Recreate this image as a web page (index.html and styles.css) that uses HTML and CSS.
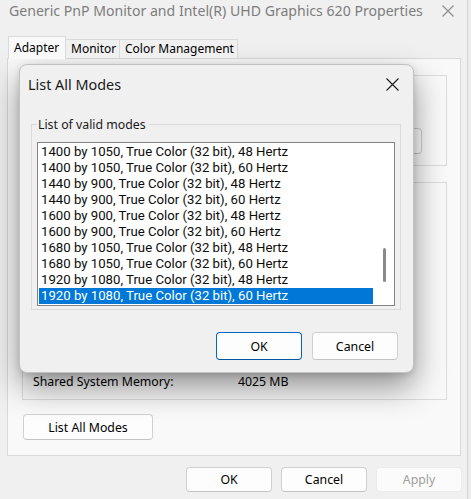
FILE: index.html
```html
<!DOCTYPE html>
<html>
<head>
<meta charset="utf-8">
<link rel="stylesheet" href="styles.css">
</head>
<body>
<div class="window">
  <div class="titlebar">
    <span class="title">Generic PnP Monitor and Intel(R) UHD Graphics 620 Properties</span>
    <svg class="xicon" width="12" height="12" viewBox="0 0 12 12"><path d="M0.5 0.5L11.5 11.5M11.5 0.5L0.5 11.5" stroke="#8a8a8a" stroke-width="1.1" fill="none"/></svg>
  </div>
  <div class="tabs">
    <div class="tab active">Adapter</div>
    <div class="tab">Monitor</div>
    <div class="tab">Color Management</div>
  </div>
  <div class="panel">
    <div class="group g1"><div class="btn gbtn">Properties</div></div>
    <div class="group g2">
      <div class="memrow"><span class="memlabel">Shared System Memory:</span><span>4025 MB</span></div>
    </div>
    <div class="btn listbtn">List All Modes</div>
  </div>
  <div class="footer">
    <div class="btn fbtn">OK</div>
    <div class="btn fbtn">Cancel</div>
    <div class="btn fbtn disabled">Apply</div>
  </div>

  <div class="dialog">
    <div class="dtitlebar">
      <span class="dtitle">List All Modes</span>
      <svg class="dx" width="13" height="13" viewBox="0 0 13 13"><path d="M0.5 0.5L12.5 12.5M12.5 0.5L0.5 12.5" stroke="#1a1a1a" stroke-width="1.1" fill="none"/></svg>
    </div>
    <fieldset class="modes">
      <legend>List of valid modes</legend>
      <div class="listbox">
        <div class="rows">
          <div class="row">1400 by 1050, True Color (32 bit), 48 Hertz</div>
          <div class="row">1400 by 1050, True Color (32 bit), 60 Hertz</div>
          <div class="row">1440 by 900, True Color (32 bit), 48 Hertz</div>
          <div class="row">1440 by 900, True Color (32 bit), 60 Hertz</div>
          <div class="row">1600 by 900, True Color (32 bit), 48 Hertz</div>
          <div class="row">1600 by 900, True Color (32 bit), 60 Hertz</div>
          <div class="row">1680 by 1050, True Color (32 bit), 48 Hertz</div>
          <div class="row">1680 by 1050, True Color (32 bit), 60 Hertz</div>
          <div class="row">1920 by 1080, True Color (32 bit), 48 Hertz</div>
          <div class="row sel">1920 by 1080, True Color (32 bit), 60 Hertz</div>
        </div>
        <div class="scroll"><div class="thumb"></div></div>
      </div>
    </fieldset>
    <div class="dbuttons">
      <div class="btn dbtn default">OK</div>
      <div class="btn dbtn">Cancel</div>
    </div>
  </div>
</div>
</body>
</html>
```

FILE: styles.css
```css
html, body {
  margin: 0;
  padding: 0;
}
body {
  width: 471px;
  height: 499px;
  overflow: hidden;
  background: #ececec;
  font-family: "Noto Sans", "Open Sans", sans-serif;
  font-size: 12.3px;
  color: #000;
}
.window {
  position: relative;
  width: 468px;
  height: 499px;
  background: #f0f0f0;
  border-right: 1px solid #d4d4d4;
  box-sizing: border-box;
}
.titlebar {
  height: 21px;
  display: flex;
  align-items: center;
  justify-content: space-between;
  padding: 0 13px 0 9px;
}
.title {
  font-size: 14.1px;
  color: #7d7d7d;
  white-space: nowrap;
}
.tabs {
  display: flex;
  align-items: flex-end;
  height: 22px;
  margin: 15px 0 0 8px;
  position: relative;
  z-index: 1;
}
.tab {
  height: 19px;
  line-height: 18px;
  padding: 0 5px;
  border: 1px solid #d9d9d9;
  border-bottom: none;
  background: #f0f0f0;
  box-sizing: border-box;
  white-space: nowrap;
  font-size: 12px;
}
.tab + .tab {
  border-left: none;
}
.tab.active {
  height: 23px;
  line-height: 22px;
  background: #f9f9f9;
  width: 58px;
  margin-bottom: -1px;
  padding: 0 5px;
}
.tab:nth-child(2) { width: 54px; }
.tab:nth-child(3) { width: 118px; }
.panel {
  margin-left: 7px;
  width: 454px;
  height: 398px;
  border: 1px solid #d9d9d9;
  background: #f9f9f9;
  box-sizing: border-box;
  padding: 16px 0 0 14px;
  display: flex;
  flex-direction: column;
}
.group {
  width: 425px;
  border: 1px solid #dcdcdc;
  box-sizing: border-box;
}
.g1 {
  height: 91px;
  display: flex;
  justify-content: flex-end;
  padding: 52px 24px 0 0;
}
.gbtn {
  width: 90px;
  height: 26px;
}
.g2 {
  height: 218px;
  margin-top: 16px;
  display: flex;
  flex-direction: column;
  justify-content: flex-end;
  padding: 0 0 9px 10px;
}
.memrow {
  display: flex;
  line-height: 16px;
}
.memlabel {
  width: 205px;
}
.btn {
  display: flex;
  align-items: center;
  justify-content: center;
  background: #fdfdfd;
  border: 1px solid #d0d0d0;
  border-bottom-color: #c4c4c4;
  border-radius: 4px;
  box-sizing: border-box;
  white-space: nowrap;
}
.listbtn {
  width: 130px;
  height: 26px;
  margin-top: 14px;
  margin-left: 1px;
}
.footer {
  display: flex;
  justify-content: flex-end;
  gap: 9px;
  padding: 11px 5px 0 0;
}
.fbtn {
  width: 86px;
  height: 25px;
}
.fbtn.disabled {
  color: #a0a0a0;
  background: #fbfbfb;
  border-color: #ececec;
}

/* dialog */
.dialog {
  position: absolute;
  left: 19px;
  top: 64px;
  width: 395px;
  height: 309px;
  box-sizing: border-box;
  background: #f0f0f0;
  border: 1px solid #c2c2c2;
  border-radius: 8px;
  box-shadow: 0 14px 32px rgba(0, 0, 0, 0.42), 0 2px 6px rgba(0, 0, 0, 0.12);
  display: flex;
  flex-direction: column;
}
.dtitlebar {
  height: 38px;
  display: flex;
  align-items: center;
  justify-content: space-between;
  padding: 1px 14px 0 8px;
  box-sizing: border-box;
}
.dtitle {
  font-size: 14.4px;
  color: #1a1a1a;
}
.modes {
  margin: 13px 0 0 11px;
  width: 370px;
  height: 194px;
  box-sizing: border-box;
  border: 1px solid #dadada;
  padding: 0 0 0 5px;
}
.modes legend {
  padding: 0 3px 0 1px;
  margin-left: 0;
  line-height: 17px;
  color: #1a1a1a;
}
.listbox {
  margin-top: 9px;
  width: 358px;
  height: 164px;
  box-sizing: border-box;
  border: 1px solid #828282;
  background: #fff;
  display: flex;
}
.rows {
  width: 334px;
  padding: 1px 0 1px 1px;
}
.row {
  height: 16px;
  line-height: 16px;
  padding-left: 2px;
  white-space: nowrap;
  color: #0c0c0c;
  font-family: Roboto, "Noto Sans", sans-serif;
  font-size: 13.2px;
}
.row.sel {
  background: #0078d7;
  color: #fff;
}
.scroll {
  flex: 1;
  display: flex;
  justify-content: center;
  padding-left: 1px;
}
.thumb {
  width: 3px;
  height: 34px;
  margin-top: 105px;
  border-radius: 2px;
  background: #8a8a8a;
}
.dbuttons {
  display: flex;
  justify-content: flex-end;
  gap: 10px;
  padding: 22px 15px 0 0;
}
.dbtn {
  width: 86px;
  height: 28px;
}
.dbtn.default {
  border: 1px solid #0067c0;
  border-bottom-color: #00579f;
}
```
